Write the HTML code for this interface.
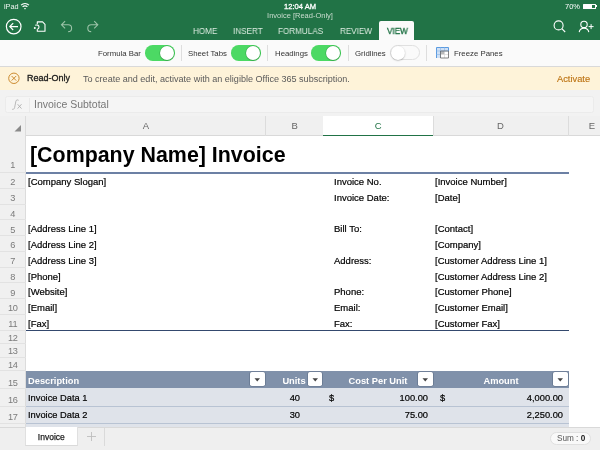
<!DOCTYPE html><html><head><meta charset="utf-8"><style>
*{margin:0;padding:0;box-sizing:border-box}
html,body{width:600px;height:450px;overflow:hidden;background:#fff;font-family:"Liberation Sans",sans-serif}
.a{position:absolute;white-space:nowrap}
.t{position:absolute;white-space:nowrap;line-height:1;will-change:transform}
</style></head><body>

<div class="a" style="left:0;top:0;width:600px;height:40px;background:#217346"></div>
<div class="t" style="left:3.6px;top:2.9px;font-size:7.3px;color:#eef4f0">iPad</div>
<svg class="a" style="left:20px;top:2px" width="10" height="8" viewBox="0 0 10 8"><path d="M1 3.2 A6 6 0 0 1 9 3.2" fill="none" stroke="#fff" stroke-width="1.1"/><path d="M2.6 4.8 A3.8 3.8 0 0 1 7.4 4.8" fill="none" stroke="#fff" stroke-width="1.1"/><path d="M3.9 6.4 L5 7.6 L6.1 6.4 A1.6 1.6 0 0 0 3.9 6.4Z" fill="#fff"/></svg>
<div class="t" style="left:0;width:600px;text-align:center;top:2.7px;font-size:7.6px;color:#fff;-webkit-text-stroke:0.3px #fff">12:04 AM</div>
<div class="t" style="left:0;width:600px;text-align:center;top:12px;font-size:7.5px;color:#c9dccf">Invoice [Read-Only]</div>
<div class="t" style="left:564.6px;top:2.6px;font-size:7.5px;color:#fff">70%</div>
<div class="a" style="left:582.5px;top:3.6px;width:13.2px;height:5.4px;border:0.7px solid #fff;border-radius:0.6px"></div>
<div class="a" style="left:583.5px;top:4.6px;width:8px;height:3.4px;background:#fff"></div>
<div class="a" style="left:595.8px;top:5.2px;width:1.3px;height:2px;background:#fff"></div>
<svg class="a" style="left:0;top:14px" width="110" height="26" viewBox="0 14 110 26"><circle cx="13.7" cy="26.6" r="7.3" fill="none" stroke="#fff" stroke-width="1.2"/><path d="M9.8 26.6 H18 M13.2 23.2 L9.8 26.6 L13.2 30" fill="none" stroke="#fff" stroke-width="1.2"/><path d="M37.3 24 V21.9 H42.6 L45 24.4 V31.2 H37.3 V29.3" fill="none" stroke="#fff" stroke-width="1.1" stroke-linejoin="round"/><path d="M35.2 25.2 C37 24.6 39 25 39 27 C39 28.4 38.2 29 37.4 29.2" fill="none" stroke="#fff" stroke-width="1.1"/><circle cx="34.8" cy="27.9" r="1" fill="#fff"/><path d="M61.6 24.8 H68.2 A3.4 3.4 0 0 1 68.2 31.6 M65.1 21.2 L61.5 24.8 L65.1 28.4" fill="none" stroke="#9cc3a8" stroke-width="1.1"/><path d="M97.6 24.8 H91.2 A3.4 3.4 0 0 0 91.2 31.6 M94.2 21.2 L97.8 24.8 L94.2 28.4" fill="none" stroke="#9cc3a8" stroke-width="1.1"/></svg>
<svg class="a" style="left:540px;top:14px" width="60" height="26" viewBox="540 14 60 26"><circle cx="558.6" cy="25.4" r="4.5" fill="none" stroke="#fff" stroke-width="1.1"/><path d="M561.8 28.6 L565.2 32" fill="none" stroke="#fff" stroke-width="1.1"/><circle cx="584" cy="24.4" r="3.2" fill="none" stroke="#fff" stroke-width="1.1"/><path d="M579.2 32.2 C579.6 29.4 581.4 28.2 584 28.2 C586.6 28.2 588.4 29.4 588.8 32.2" fill="none" stroke="#fff" stroke-width="1.1"/><path d="M588.6 26.6 H593.6 M591.1 24.1 V29.1" fill="none" stroke="#fff" stroke-width="1"/></svg>
<div class="t" style="left:192.7px;top:26.6px;font-size:8.7px;color:#dcebe0;transform:scaleX(0.935);transform-origin:0 0">HOME</div>
<div class="t" style="left:233.1px;top:26.6px;font-size:8.7px;color:#dcebe0;transform:scaleX(0.935);transform-origin:0 0">INSERT</div>
<div class="t" style="left:278.09999999999997px;top:26.6px;font-size:8.7px;color:#dcebe0;transform:scaleX(0.935);transform-origin:0 0">FORMULAS</div>
<div class="t" style="left:339.7px;top:26.6px;font-size:8.7px;color:#dcebe0;transform:scaleX(0.935);transform-origin:0 0">REVIEW</div>
<div class="a" style="left:379.3px;top:21px;width:35.2px;height:19px;background:#fafafa;border-radius:2px 2px 0 0"></div>
<div class="t" style="left:386.6px;top:26.6px;font-size:8.7px;color:#217346;-webkit-text-stroke:0.35px #217346;transform:scaleX(0.935);transform-origin:0 0">VIEW</div>
<div class="a" style="left:0;top:40px;width:600px;height:26.5px;background:#fafafa;border-bottom:1px solid #d9d9d9"></div>
<div class="t" style="left:97.8px;top:50px;font-size:7.8px;color:#333">Formula Bar</div>
<div class="a" style="left:144.7px;top:45.1px;width:30px;height:15.5px;border-radius:7.75px;background:#4cd964"></div>
<div class="a" style="left:159.79999999999998px;top:45.7px;width:14.3px;height:14.3px;border-radius:50%;background:#fff;box-shadow:0 0 0 0.5px rgba(30,140,50,0.6),0 0.8px 1.2px rgba(0,0,0,0.2)"></div>
<div class="a" style="left:181.3px;top:45px;width:0.8px;height:16px;background:#dedede"></div>
<div class="t" style="left:188px;top:50px;font-size:7.8px;color:#333">Sheet Tabs</div>
<div class="a" style="left:231px;top:45.1px;width:30px;height:15.5px;border-radius:7.75px;background:#4cd964"></div>
<div class="a" style="left:246.1px;top:45.7px;width:14.3px;height:14.3px;border-radius:50%;background:#fff;box-shadow:0 0 0 0.5px rgba(30,140,50,0.6),0 0.8px 1.2px rgba(0,0,0,0.2)"></div>
<div class="a" style="left:267.3px;top:45px;width:0.8px;height:16px;background:#dedede"></div>
<div class="t" style="left:274.7px;top:50px;font-size:7.8px;color:#333">Headings</div>
<div class="a" style="left:311px;top:45.1px;width:30px;height:15.5px;border-radius:7.75px;background:#4cd964"></div>
<div class="a" style="left:326.1px;top:45.7px;width:14.3px;height:14.3px;border-radius:50%;background:#fff;box-shadow:0 0 0 0.5px rgba(30,140,50,0.6),0 0.8px 1.2px rgba(0,0,0,0.2)"></div>
<div class="a" style="left:347.5px;top:45px;width:0.8px;height:16px;background:#dedede"></div>
<div class="t" style="left:354.8px;top:50px;font-size:7.8px;color:#333">Gridlines</div>
<div class="a" style="left:390px;top:45.3px;width:29.5px;height:15.2px;border-radius:7.6px;background:#fafafa;border:0.9px solid #e0e0e0"></div>
<div class="a" style="left:390.5px;top:45.8px;width:14.3px;height:14.3px;border-radius:50%;background:#fff;box-shadow:0 0.6px 1.6px rgba(0,0,0,0.35)"></div>
<div class="a" style="left:426.3px;top:45px;width:0.8px;height:16px;background:#dedede"></div>
<svg class="a" style="left:435px;top:46px" width="16" height="14" viewBox="435 46 16 14"><rect x="436.5" y="47.5" width="12" height="10.5" fill="#fff"/><rect x="436.5" y="47.5" width="12" height="3.5" fill="#cfe0f5"/><rect x="436.5" y="51" width="4" height="7" fill="#cfe0f5"/><rect x="440.5" y="51" width="4" height="3.5" fill="#b9b9b9"/><path d="M436.5 58 V47.5 H448.5 V51" fill="none" stroke="#5b9be0" stroke-width="1"/><path d="M436.5 51 H448.5 M440.5 47.5 V58 M444.5 47.5 V51 M436.5 54.5 H440.5" fill="none" stroke="#8fbcec" stroke-width="0.7"/><path d="M444.5 51 V58 M440.5 54.5 H448.5" fill="none" stroke="#d8d8d8" stroke-width="0.7"/><path d="M440.5 51 H448.5 V58 H440.5 Z" fill="none" stroke="#666" stroke-width="0.8"/></svg>
<div class="t" style="left:454px;top:50px;font-size:7.8px;color:#333">Freeze Panes</div>
<div class="a" style="left:0;top:66.5px;width:600px;height:23.5px;background:#fef3d9"></div>
<svg class="a" style="left:6px;top:71px" width="16" height="16" viewBox="6 71 16 16"><circle cx="13.9" cy="78.3" r="5.2" fill="none" stroke="#c98526" stroke-width="0.95"/><path d="M11.6 76 L16.2 80.6 M16.2 76 L11.6 80.6" stroke="#c98526" stroke-width="0.95"/></svg>
<div class="t" style="left:26.6px;top:74.4px;font-size:9px;color:#1a1a1a;-webkit-text-stroke:0.3px #1a1a1a">Read-Only</div>
<div class="t" style="left:83px;top:74.5px;font-size:9.05px;color:#5a5a5a">To create and edit, activate with an eligible Office 365 subscription.</div>
<div class="t" style="left:557px;top:74.5px;font-size:9.3px;color:#bd7414;-webkit-text-stroke:0.15px #bd7414">Activate</div>
<div class="a" style="left:0;top:90px;width:600px;height:26px;background:#f2f2f2"></div>
<div class="a" style="left:5px;top:96.3px;width:589px;height:16.5px;background:#f5f5f5;border:0.8px solid #ebebeb;border-radius:2.5px"></div>
<div class="a" style="left:29px;top:97.5px;width:0.8px;height:15px;background:#eaeaea"></div>
<svg class="a" style="left:8px;top:96px" width="20" height="18" viewBox="8 96 20 18"><path d="M18.6 100.3 C17.8 99.7 16.3 99.6 15.9 101.2 L14.6 107.6 C14.3 109 13.4 109.6 12.2 109.3" fill="none" stroke="#a8a8a8" stroke-width="0.8"/><path d="M17.6 104.2 L21.5 108.6 M21.5 104.2 L17.6 108.6" fill="none" stroke="#a8a8a8" stroke-width="0.8"/></svg>
<div class="t" style="left:34px;top:98.5px;font-size:10.5px;color:#777">Invoice Subtotal</div>
<div class="a" style="left:0;top:115.5px;width:600px;height:20.5px;background:#f0f0f0;border-bottom:1px solid #d9d9d9"></div>
<svg class="a" style="left:14px;top:124px" width="8" height="8" viewBox="0 0 8 8"><path d="M0.5 7.5 H7 V1 Z" fill="#8a8a8a"/></svg>
<div class="a" style="left:25.0px;top:116px;width:1px;height:19.5px;background:#dcdcdc"></div>
<div class="t" style="left:25.5px;width:240.0px;text-align:center;top:121.2px;font-size:9.5px;color:#666">A</div>
<div class="a" style="left:265.0px;top:116px;width:1px;height:19.5px;background:#dcdcdc"></div>
<div class="t" style="left:265.5px;width:57.5px;text-align:center;top:121.2px;font-size:9.5px;color:#666">B</div>
<div class="a" style="left:322.5px;top:116px;width:1px;height:19.5px;background:#dcdcdc"></div>
<div class="a" style="left:323px;top:116px;width:109.80000000000001px;height:19.5px;background:#fff;border-bottom:1.6px solid #217346"></div>
<div class="t" style="left:323px;width:110.30000000000001px;text-align:center;top:121.2px;font-size:9.5px;color:#217346">C</div>
<div class="a" style="left:432.8px;top:116px;width:1px;height:19.5px;background:#dcdcdc"></div>
<div class="t" style="left:433.3px;width:134.99999999999994px;text-align:center;top:121.2px;font-size:9.5px;color:#666">D</div>
<div class="a" style="left:567.8px;top:116px;width:1px;height:19.5px;background:#dcdcdc"></div>
<div class="t" style="left:568.3px;width:48px;text-align:center;top:121.2px;font-size:9.5px;color:#666">E</div>
<div class="a" style="left:0;top:135.4px;width:25.5px;height:292px;background:#f0f0f0;border-right:1px solid #dcdcdc"></div>
<div class="a" style="left:0;top:172.1px;width:25.5px;height:0.8px;background:#e2e2e2"></div>
<div class="t" style="left:0;width:25.5px;text-align:center;top:161.3px;font-size:9.2px;letter-spacing:-0.3px;color:#7a7a7a">1</div>
<div class="a" style="left:0;top:187.85px;width:25.5px;height:0.8px;background:#e2e2e2"></div>
<div class="t" style="left:0;width:25.5px;text-align:center;top:178.35px;font-size:9.2px;letter-spacing:-0.3px;color:#7a7a7a">2</div>
<div class="a" style="left:0;top:203.6px;width:25.5px;height:0.8px;background:#e2e2e2"></div>
<div class="t" style="left:0;width:25.5px;text-align:center;top:194.1px;font-size:9.2px;letter-spacing:-0.3px;color:#7a7a7a">3</div>
<div class="a" style="left:0;top:219.35px;width:25.5px;height:0.8px;background:#e2e2e2"></div>
<div class="t" style="left:0;width:25.5px;text-align:center;top:209.85px;font-size:9.2px;letter-spacing:-0.3px;color:#7a7a7a">4</div>
<div class="a" style="left:0;top:235.1px;width:25.5px;height:0.8px;background:#e2e2e2"></div>
<div class="t" style="left:0;width:25.5px;text-align:center;top:225.6px;font-size:9.2px;letter-spacing:-0.3px;color:#7a7a7a">5</div>
<div class="a" style="left:0;top:250.85px;width:25.5px;height:0.8px;background:#e2e2e2"></div>
<div class="t" style="left:0;width:25.5px;text-align:center;top:241.35px;font-size:9.2px;letter-spacing:-0.3px;color:#7a7a7a">6</div>
<div class="a" style="left:0;top:266.6px;width:25.5px;height:0.8px;background:#e2e2e2"></div>
<div class="t" style="left:0;width:25.5px;text-align:center;top:257.1px;font-size:9.2px;letter-spacing:-0.3px;color:#7a7a7a">7</div>
<div class="a" style="left:0;top:282.35px;width:25.5px;height:0.8px;background:#e2e2e2"></div>
<div class="t" style="left:0;width:25.5px;text-align:center;top:272.85px;font-size:9.2px;letter-spacing:-0.3px;color:#7a7a7a">8</div>
<div class="a" style="left:0;top:298.1px;width:25.5px;height:0.8px;background:#e2e2e2"></div>
<div class="t" style="left:0;width:25.5px;text-align:center;top:288.6px;font-size:9.2px;letter-spacing:-0.3px;color:#7a7a7a">9</div>
<div class="a" style="left:0;top:313.85px;width:25.5px;height:0.8px;background:#e2e2e2"></div>
<div class="t" style="left:0;width:25.5px;text-align:center;top:304.35px;font-size:9.2px;letter-spacing:-0.3px;color:#7a7a7a">10</div>
<div class="a" style="left:0;top:329.6px;width:25.5px;height:0.8px;background:#e2e2e2"></div>
<div class="t" style="left:0;width:25.5px;text-align:center;top:320.1px;font-size:9.2px;letter-spacing:-0.3px;color:#7a7a7a">11</div>
<div class="a" style="left:0;top:343.20000000000005px;width:25.5px;height:0.8px;background:#e2e2e2"></div>
<div class="t" style="left:0;width:25.5px;text-align:center;top:333.70000000000005px;font-size:9.2px;letter-spacing:-0.3px;color:#7a7a7a">12</div>
<div class="a" style="left:0;top:356.8px;width:25.5px;height:0.8px;background:#e2e2e2"></div>
<div class="t" style="left:0;width:25.5px;text-align:center;top:347.3px;font-size:9.2px;letter-spacing:-0.3px;color:#7a7a7a">13</div>
<div class="a" style="left:0;top:370.40000000000003px;width:25.5px;height:0.8px;background:#e2e2e2"></div>
<div class="t" style="left:0;width:25.5px;text-align:center;top:360.90000000000003px;font-size:9.2px;letter-spacing:-0.3px;color:#7a7a7a">14</div>
<div class="a" style="left:0;top:388.0px;width:25.5px;height:0.8px;background:#e2e2e2"></div>
<div class="t" style="left:0;width:25.5px;text-align:center;top:378.5px;font-size:9.2px;letter-spacing:-0.3px;color:#7a7a7a">15</div>
<div class="a" style="left:0;top:405.8px;width:25.5px;height:0.8px;background:#e2e2e2"></div>
<div class="t" style="left:0;width:25.5px;text-align:center;top:396.3px;font-size:9.2px;letter-spacing:-0.3px;color:#7a7a7a">16</div>
<div class="a" style="left:0;top:422.90000000000003px;width:25.5px;height:0.8px;background:#e2e2e2"></div>
<div class="t" style="left:0;width:25.5px;text-align:center;top:413.40000000000003px;font-size:9.2px;letter-spacing:-0.3px;color:#7a7a7a">17</div>
<div class="t" style="left:30px;top:145px;font-size:21.4px;font-weight:bold;color:#000">[Company Name] Invoice</div>
<div class="a" style="left:25.5px;top:171.7px;width:543.3px;height:1.9px;background:#6c80a4"></div>
<div class="a" style="left:25.5px;top:329.5px;width:543px;height:1.4px;background:#34496e"></div>
<div class="t" style="left:27.7px;top:177.16px;font-size:9.5px;color:#000;-webkit-text-stroke:0.2px #000;">[Company Slogan]</div>
<div class="t" style="left:27.7px;top:224.41px;font-size:9.5px;color:#000;-webkit-text-stroke:0.2px #000;">[Address Line 1]</div>
<div class="t" style="left:27.7px;top:240.16px;font-size:9.5px;color:#000;-webkit-text-stroke:0.2px #000;">[Address Line 2]</div>
<div class="t" style="left:27.7px;top:255.91px;font-size:9.5px;color:#000;-webkit-text-stroke:0.2px #000;">[Address Line 3]</div>
<div class="t" style="left:27.7px;top:271.66px;font-size:9.5px;color:#000;-webkit-text-stroke:0.2px #000;">[Phone]</div>
<div class="t" style="left:27.7px;top:287.41px;font-size:9.5px;color:#000;-webkit-text-stroke:0.2px #000;">[Website]</div>
<div class="t" style="left:27.7px;top:303.16px;font-size:9.5px;color:#000;-webkit-text-stroke:0.2px #000;">[Email]</div>
<div class="t" style="left:27.7px;top:318.91px;font-size:9.5px;color:#000;-webkit-text-stroke:0.2px #000;">[Fax]</div>
<div class="t" style="left:333.8px;top:177.16px;font-size:9.5px;color:#000;-webkit-text-stroke:0.2px #000;">Invoice No.</div>
<div class="t" style="left:333.8px;top:192.91px;font-size:9.5px;color:#000;-webkit-text-stroke:0.2px #000;">Invoice Date:</div>
<div class="t" style="left:333.8px;top:224.41px;font-size:9.5px;color:#000;-webkit-text-stroke:0.2px #000;">Bill To:</div>
<div class="t" style="left:333.8px;top:255.91px;font-size:9.5px;color:#000;-webkit-text-stroke:0.2px #000;">Address:</div>
<div class="t" style="left:333.8px;top:287.41px;font-size:9.5px;color:#000;-webkit-text-stroke:0.2px #000;">Phone:</div>
<div class="t" style="left:333.8px;top:303.16px;font-size:9.5px;color:#000;-webkit-text-stroke:0.2px #000;">Email:</div>
<div class="t" style="left:333.8px;top:318.91px;font-size:9.5px;color:#000;-webkit-text-stroke:0.2px #000;">Fax:</div>
<div class="t" style="left:434.7px;top:177.16px;font-size:9.5px;color:#000;-webkit-text-stroke:0.2px #000;">[Invoice Number]</div>
<div class="t" style="left:434.7px;top:192.91px;font-size:9.5px;color:#000;-webkit-text-stroke:0.2px #000;">[Date]</div>
<div class="t" style="left:434.7px;top:224.41px;font-size:9.5px;color:#000;-webkit-text-stroke:0.2px #000;">[Contact]</div>
<div class="t" style="left:434.7px;top:240.16px;font-size:9.5px;color:#000;-webkit-text-stroke:0.2px #000;">[Company]</div>
<div class="t" style="left:434.7px;top:255.91px;font-size:9.5px;color:#000;-webkit-text-stroke:0.2px #000;">[Customer Address Line 1]</div>
<div class="t" style="left:434.7px;top:271.66px;font-size:9.5px;color:#000;-webkit-text-stroke:0.2px #000;">[Customer Address Line 2]</div>
<div class="t" style="left:434.7px;top:287.41px;font-size:9.5px;color:#000;-webkit-text-stroke:0.2px #000;">[Customer Phone]</div>
<div class="t" style="left:434.7px;top:303.16px;font-size:9.5px;color:#000;-webkit-text-stroke:0.2px #000;">[Customer Email]</div>
<div class="t" style="left:434.7px;top:318.91px;font-size:9.5px;color:#000;-webkit-text-stroke:0.2px #000;">[Customer Fax]</div>
<div class="a" style="left:25.8px;top:370.8px;width:543.2px;height:17.899999999999967px;background:#8091aa"></div>
<div class="a" style="left:25.8px;top:388.4px;width:543.2px;height:38.60000000000002px;background:#dfe3ea"></div>
<div class="a" style="left:25.8px;top:405.59999999999997px;width:543.2px;height:1px;background:#b8c3d3"></div>
<div class="a" style="left:25.8px;top:422.7px;width:543.2px;height:1px;background:#b8c3d3"></div>
<div class="t" style="left:27.7px;top:377.03px;font-size:9.3px;font-weight:bold;color:#fff">Description</div>
<div class="t" style="left:194.2px;width:200px;text-align:center;top:377.03px;font-size:9.3px;font-weight:bold;color:#fff">Units</div>
<div class="t" style="left:278.2px;width:200px;text-align:center;top:377.03px;font-size:9.3px;font-weight:bold;color:#fff">Cost Per Unit</div>
<div class="t" style="left:401px;width:200px;text-align:center;top:377.03px;font-size:9.3px;font-weight:bold;color:#fff">Amount</div>
<div class="a" style="left:250.10000000000002px;top:372.2px;width:14.8px;height:13.8px;background:#fff;border-radius:1.8px;box-shadow:0 0 0 0.6px rgba(70,85,110,0.55)"></div>
<svg class="a" style="left:254.3px;top:377.5px" width="7" height="4" viewBox="0 0 7 4"><path d="M0.5 0.3 H6 L3.25 3.6Z" fill="#444"/></svg>
<div class="a" style="left:307.6px;top:372.2px;width:14.8px;height:13.8px;background:#fff;border-radius:1.8px;box-shadow:0 0 0 0.6px rgba(70,85,110,0.55)"></div>
<svg class="a" style="left:311.8px;top:377.5px" width="7" height="4" viewBox="0 0 7 4"><path d="M0.5 0.3 H6 L3.25 3.6Z" fill="#444"/></svg>
<div class="a" style="left:417.8px;top:372.2px;width:14.8px;height:13.8px;background:#fff;border-radius:1.8px;box-shadow:0 0 0 0.6px rgba(70,85,110,0.55)"></div>
<svg class="a" style="left:422px;top:377.5px" width="7" height="4" viewBox="0 0 7 4"><path d="M0.5 0.3 H6 L3.25 3.6Z" fill="#444"/></svg>
<div class="a" style="left:552.8px;top:372.2px;width:14.8px;height:13.8px;background:#fff;border-radius:1.8px;box-shadow:0 0 0 0.6px rgba(70,85,110,0.55)"></div>
<svg class="a" style="left:557px;top:377.5px" width="7" height="4" viewBox="0 0 7 4"><path d="M0.5 0.3 H6 L3.25 3.6Z" fill="#444"/></svg>
<div class="t" style="left:27.5px;top:394.03px;font-size:9.3px;-webkit-text-stroke:0.2px #000;color:#000">Invoice Data 1</div>
<div class="t" style="left:27.5px;top:411.33px;font-size:9.3px;-webkit-text-stroke:0.2px #000;color:#000">Invoice Data 2</div>
<div class="t" style="left:100.19999999999999px;width:200px;text-align:right;top:394.03px;font-size:9.3px;-webkit-text-stroke:0.2px #000;color:#000">40</div>
<div class="t" style="left:100.19999999999999px;width:200px;text-align:right;top:411.33px;font-size:9.3px;-webkit-text-stroke:0.2px #000;color:#000">30</div>
<div class="t" style="left:328.6px;top:394.03px;font-size:9.3px;-webkit-text-stroke:0.2px #000;color:#000">$</div>
<div class="t" style="left:227.8px;width:200px;text-align:right;top:394.03px;font-size:9.3px;-webkit-text-stroke:0.2px #000;color:#000">100.00</div>
<div class="t" style="left:227.8px;width:200px;text-align:right;top:411.33px;font-size:9.3px;-webkit-text-stroke:0.2px #000;color:#000">75.00</div>
<div class="t" style="left:439.5px;top:394.03px;font-size:9.3px;-webkit-text-stroke:0.2px #000;color:#000">$</div>
<div class="t" style="left:363.4px;width:200px;text-align:right;top:394.03px;font-size:9.3px;-webkit-text-stroke:0.2px #000;color:#000">4,000.00</div>
<div class="t" style="left:363.4px;width:200px;text-align:right;top:411.33px;font-size:9.3px;-webkit-text-stroke:0.2px #000;color:#000">2,250.00</div>
<div class="a" style="left:0;top:426.6px;width:600px;height:23.4px;background:#efefef;border-top:1px solid #d9d9d9"></div>
<div class="a" style="left:25px;top:427px;width:52.6px;height:19px;background:#fff;border-left:0.6px solid #e0e0e0;border-right:0.6px solid #e0e0e0;border-bottom:0.8px solid #dadada"></div>
<div class="t" style="left:25px;width:52.6px;text-align:center;top:433px;font-size:8.5px;color:#222;-webkit-text-stroke:0.25px #222">Invoice</div>
<svg class="a" style="left:86px;top:431px" width="11" height="11" viewBox="0 0 11 11"><path d="M5.5 1 V10 M1 5.5 H10" stroke="#bdbdbd" stroke-width="0.9"/></svg>
<div class="a" style="left:104.2px;top:428px;width:0.8px;height:18px;background:#dadada"></div>
<div class="a" style="left:550.4px;top:431.7px;width:41px;height:13.5px;background:#f9f9f9;border:0.8px solid #e0e0e0;border-radius:7px"></div>
<div class="t" style="left:556.9px;top:435px;font-size:8.2px;color:#555">Sum : <b style="color:#222">0</b></div>
</body></html>
